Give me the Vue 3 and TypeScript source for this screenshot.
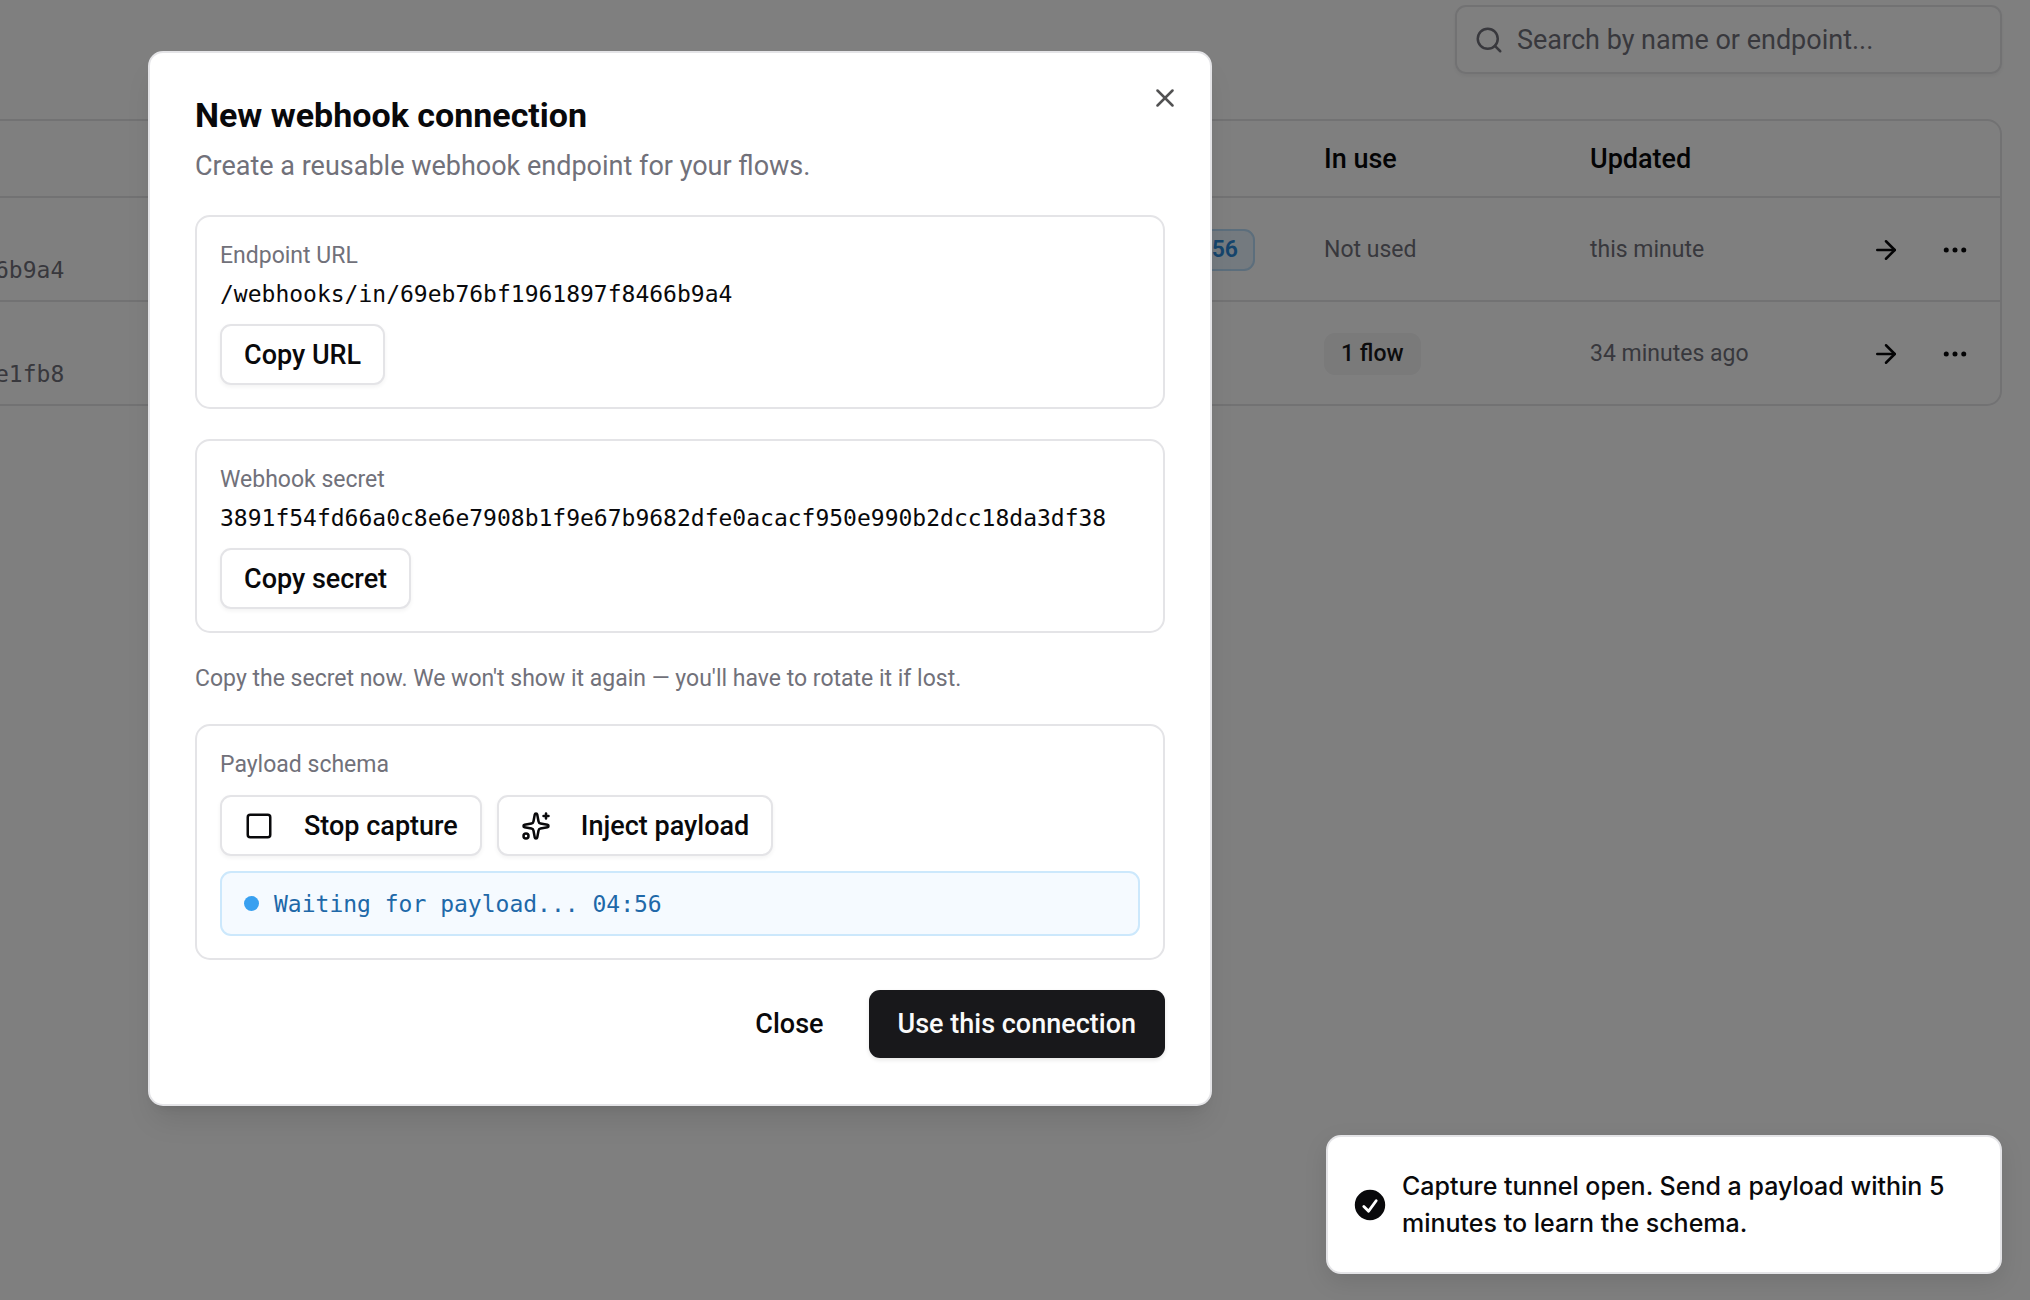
<script setup lang="ts">
import { ref } from 'vue'

interface Connection {
  tail: string
  capture: string
  flows: string
  updated: string
}

const connections: Connection[] = [
  { tail: '6b9a4', capture: '04:56', flows: '', updated: 'this minute' },
  { tail: 'e1fb8', capture: '', flows: '1 flow', updated: '34 minutes ago' },
]

const endpointUrl = '/webhooks/in/69eb76bf1961897f8466b9a4'
const secret = '3891f54fd66a0c8e6e7908b1f9e67b9682dfe0acacf950e990b2dcc18da3df38'
const query = ref('')
</script>

<template>
  <div class="page">
    <header class="toolbar">
      <label class="search">
        <svg class="icon" viewBox="0 0 24 24" aria-hidden="true"><circle cx="11" cy="11" r="8" /><path d="m21 21-4.3-4.3" /></svg>
        <input v-model="query" type="text" aria-label="Search connections" placeholder="Search by name or endpoint..." />
      </label>
    </header>

    <div class="table-shell">
      <table>
        <colgroup>
          <col />
          <col class="col-capture" />
          <col class="col-use" />
          <col class="col-updated" />
          <col class="col-actions" />
        </colgroup>
        <thead>
          <tr>
            <th></th>
            <th></th>
            <th>In use</th>
            <th>Updated</th>
            <th></th>
          </tr>
        </thead>
        <tbody>
          <tr v-for="row in connections" :key="row.tail">
            <td class="path">{{ row.tail }}</td>
            <td class="capture"><span v-if="row.capture" class="badge badge-live">{{ row.capture }}</span></td>
            <td>
              <span v-if="row.flows" class="badge">{{ row.flows }}</span>
              <template v-else>Not used</template>
            </td>
            <td>{{ row.updated }}</td>
            <td>
              <div class="actions">
                <button type="button" class="icon-button" aria-label="Open">
                  <svg class="icon" viewBox="0 0 24 24"><path d="M5 12h14" /><path d="m12 5 7 7-7 7" /></svg>
                </button>
                <button type="button" class="icon-button" aria-label="More">
                  <svg class="icon" viewBox="0 0 24 24"><circle cx="12" cy="12" r="1" /><circle cx="19" cy="12" r="1" /><circle cx="5" cy="12" r="1" /></svg>
                </button>
              </div>
            </td>
          </tr>
        </tbody>
      </table>
    </div>

    <div class="overlay"></div>

    <section class="dialog" role="dialog" aria-modal="true" aria-labelledby="dialog-title">
      <div class="dialog-header">
        <h2 id="dialog-title">New webhook connection</h2>
        <p>Create a reusable webhook endpoint for your flows.</p>
      </div>

      <div class="card">
        <div class="card-label">Endpoint URL</div>
        <code>{{ endpointUrl }}</code>
        <button type="button" class="button">Copy URL</button>
      </div>

      <div class="card">
        <div class="card-label">Webhook secret</div>
        <code>{{ secret }}</code>
        <button type="button" class="button">Copy secret</button>
      </div>

      <p class="note">Copy the secret now. We won't show it again — you'll have to rotate it if lost.</p>

      <div class="card">
        <div class="card-label">Payload schema</div>
        <div class="button-row">
          <button type="button" class="button">
            <svg class="icon" viewBox="0 0 24 24"><rect width="18" height="18" x="3" y="3" rx="2" /></svg>
            Stop capture
          </button>
          <button type="button" class="button">
            <svg class="icon" viewBox="0 0 24 24">
              <path d="M11.017 2.814a1 1 0 0 1 1.966 0l1.051 5.558a2 2 0 0 0 1.594 1.594l5.558 1.051a1 1 0 0 1 0 1.966l-5.558 1.051a2 2 0 0 0-1.594 1.594l-1.051 5.558a1 1 0 0 1-1.966 0l-1.051-5.558a2 2 0 0 0-1.594-1.594l-5.558-1.051a1 1 0 0 1 0-1.966l5.558-1.051a2 2 0 0 0 1.594-1.594z" />
              <path d="M20 2v4" /><path d="M22 4h-4" /><circle cx="4" cy="20" r="2" />
            </svg>
            Inject payload
          </button>
        </div>
        <div class="status" role="status"><span class="dot"></span>Waiting for payload... 04:56</div>
      </div>

      <div class="dialog-footer">
        <button type="button" class="action ghost">Close</button>
        <button type="button" class="action primary">Use this connection</button>
      </div>

      <button type="button" class="dismiss" aria-label="Close dialog">
        <svg class="icon" viewBox="0 0 24 24"><path d="M18 6 6 18" /><path d="m6 6 12 12" /></svg>
      </button>
    </section>

    <div class="toast" role="alert">
      <svg viewBox="0 0 20 20" aria-hidden="true"><path fill-rule="evenodd" clip-rule="evenodd" d="M10 18a8 8 0 100-16 8 8 0 000 16zm3.857-9.809a.75.75 0 00-1.214-.882l-3.483 4.79-1.88-1.88a.75.75 0 10-1.06 1.061l2.5 2.5a.75.75 0 001.137-.089l4-5.5z" /></svg>
      <p>Capture tunnel open. Send a payload within 5 minutes to learn the schema.</p>
    </div>
  </div>
</template>

<style>
body {
  margin: 0;
  background: #fff;
}
</style>

<style scoped>
* {
  box-sizing: border-box;
}

.page {
  position: relative;
  min-height: 100vh;
  overflow: hidden;
  padding: 5px 28px 0 0;
  color: #09090b;
  font-family: Roboto, 'Liberation Sans', sans-serif;
  font-size: 27px;
  line-height: 38px;
}

button {
  margin: 0;
  color: inherit;
  font: inherit;
  font-weight: 500;
  white-space: nowrap;
}

h2,
p {
  margin: 0;
}

.icon {
  flex: none;
  width: 30px;
  height: 30px;
  fill: none;
  stroke: currentColor;
  stroke-width: 2;
  stroke-linecap: round;
  stroke-linejoin: round;
}

.toolbar {
  display: flex;
  justify-content: flex-end;
}

.search {
  display: flex;
  align-items: center;
  gap: 13px;
  width: 547px;
  height: 69px;
  padding: 0 17px;
  border: 2px solid #e4e4e7;
  border-radius: 11px;
  box-shadow: 0 2px 4px rgba(0, 0, 0, 0.06);
  color: #71717a;
}

.search input {
  flex: 1;
  min-width: 0;
  padding: 0;
  border: 0;
  outline: 0;
  background: transparent;
  color: #09090b;
  font: inherit;
}

.search input::placeholder {
  color: #71717a;
  opacity: 1;
}

.table-shell {
  margin: 45px 0 0 -22px;
  border: 2px solid #e4e4e7;
  border-radius: 15px;
}

table {
  width: 100%;
  border-collapse: separate;
  border-spacing: 0;
  table-layout: fixed;
}

.col-capture {
  width: 228px;
}

.col-use,
.col-updated {
  width: 266px;
}

.col-actions {
  width: 159px;
}

th {
  height: 77px;
  padding: 0 15px;
  border-bottom: 2px solid #e4e4e7;
  font-weight: 500;
  text-align: left;
}

td {
  height: 102px;
  padding: 2px 15px 0;
  color: #71717a;
  font-size: 23px;
  line-height: 30px;
  vertical-align: middle;
}

tbody tr:not(:last-child) td {
  height: 104px;
  border-bottom: 2px solid #e4e4e7;
}

.path {
  padding-bottom: 15px;
  font-family: 'DejaVu Sans Mono', monospace;
  vertical-align: bottom;
}

.capture {
  padding-right: 54px;
  text-align: right;
}

.badge {
  display: inline-flex;
  align-items: center;
  height: 42px;
  padding: 0 15px;
  border: 2px solid transparent;
  border-radius: 11px;
  background: #f4f4f5;
  color: #18181b;
  font-weight: 500;
  vertical-align: middle;
}

.badge-live {
  border-color: #b8dcf8;
  background: #e8f4fe;
  color: #2a88d8;
  font-weight: 600;
}

.actions {
  display: flex;
  gap: 8px;
}

.icon-button {
  display: flex;
  align-items: center;
  justify-content: center;
  width: 61px;
  height: 61px;
  padding: 0;
  border: 0;
  background: transparent;
  color: #09090b;
}

.overlay {
  position: absolute;
  inset: 0;
  background: rgba(0, 0, 0, 0.5);
}

.dialog {
  position: absolute;
  top: 51px;
  left: 148px;
  display: flex;
  flex-direction: column;
  gap: 30px;
  width: 1064px;
  max-width: calc(100% - 176px);
  padding: 45px 45px 46px;
  border: 2px solid #e4e4e7;
  border-radius: 15px;
  background: #fff;
  box-shadow: 0 19px 29px -6px rgba(0, 0, 0, 0.1), 0 8px 11px -8px rgba(0, 0, 0, 0.1);
}

.dialog-header {
  display: flex;
  flex-direction: column;
  gap: 15px;
}

.dialog-header h2 {
  font-size: 34px;
  font-weight: 700;
  line-height: 34px;
}

.dialog-header p {
  color: #71717a;
}

.card {
  display: flex;
  flex-direction: column;
  align-items: flex-start;
  gap: 15px;
  padding: 24px 23px 22px;
  border: 2px solid #e4e4e7;
  border-radius: 15px;
}

.card-label {
  color: #71717a;
  font-size: 23px;
  line-height: 30px;
}

.note {
  color: #71717a;
  font-size: 23px;
  line-height: 31px;
}

.card code {
  margin-top: -7px;
  font-family: 'DejaVu Sans Mono', monospace;
  font-size: 23px;
  line-height: 30px;
}

.button-row {
  display: flex;
  gap: 15px;
}

.button {
  display: flex;
  align-items: center;
  gap: 30px;
  height: 61px;
  padding: 0 22px;
  border: 2px solid #e4e4e7;
  border-radius: 11px;
  background: #fff;
  box-shadow: 0 2px 4px rgba(0, 0, 0, 0.05);
}

.status {
  display: flex;
  align-items: center;
  gap: 15px;
  align-self: stretch;
  height: 65px;
  padding: 0 22px;
  border: 2px solid #cce8fc;
  border-radius: 11px;
  background: #f5faff;
  color: #2068a8;
  font-family: 'DejaVu Sans Mono', monospace;
  font-size: 23px;
  line-height: 30px;
}

.dot {
  width: 15px;
  height: 15px;
  border-radius: 50%;
  background: #38a0f0;
}

.dialog-footer {
  display: flex;
  justify-content: flex-end;
  gap: 15px;
}

.action {
  height: 68px;
  padding: 0 30px;
  border: 0;
  border-radius: 11px;
}

.ghost {
  background: transparent;
}

.primary {
  padding: 0 29px;
  background: #18181b;
  box-shadow: 0 2px 4px rgba(0, 0, 0, 0.1);
  color: #fafafa;
}

.dismiss {
  position: absolute;
  top: 30px;
  right: 30px;
  display: flex;
  padding: 0;
  border: 0;
  background: transparent;
  opacity: 0.7;
}

.toast {
  position: absolute;
  right: 28px;
  bottom: 26px;
  display: flex;
  align-items: center;
  gap: 13px;
  width: 676px;
  max-width: calc(100% - 56px);
  padding: 31px 30px 30px 23px;
  border: 2px solid #e4e4e7;
  border-radius: 15px;
  background: #fff;
  box-shadow: 0 8px 23px rgba(0, 0, 0, 0.1);
  font-family: Inter, 'Liberation Sans', sans-serif;
  font-size: 25px;
  font-weight: 500;
  line-height: 37px;
}

.toast svg {
  flex: none;
  width: 38px;
  height: 38px;
  fill: currentColor;
}
</style>
